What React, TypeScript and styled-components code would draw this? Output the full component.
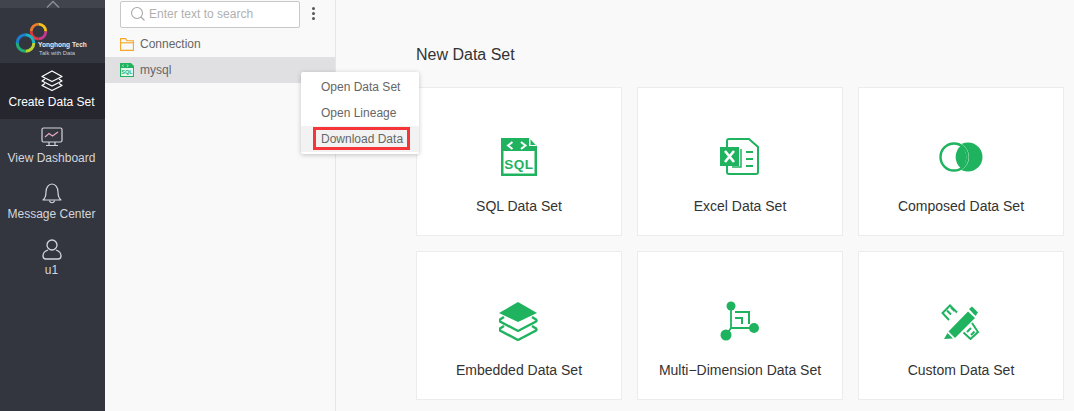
import React from "react";
import styled, { createGlobalStyle } from "styled-components";

const GREEN = "#1fb35f";

const GlobalStyle = createGlobalStyle`
  html, body {
    margin: 0;
    padding: 0;
    background: #f9f9f9;
    overflow: hidden;
  }
  * {
    box-sizing: border-box;
  }
`;

const SqlIcon = () => (
  <svg width="36" height="38" viewBox="0 0 36 38">
    <path d="M0 0H28L36 8V38H0Z" fill={GREEN} />
    <path d="M28 0V8H36" fill="#fff" />
    <path d="M29.500 1.500L34.500 7H29.500Z" fill={GREEN} />
    <rect x="2.500" y="13" width="31" height="22.500" fill="#fff" />
    <path d="M11.500 4L7 7.500L11.500 11M20 4L24.500 7.500L20 11" fill="none" stroke="#fff" strokeWidth="2" />
    <text x="18" y="31" textAnchor="middle" fontFamily="Liberation Sans, sans-serif" fontWeight="700" fontSize="13.500" letterSpacing="0.5" fill={GREEN}>SQL</text>
  </svg>
);

const ExcelIcon = () => (
  <svg width="40" height="38" viewBox="0 0 40 38">
    <path d="M7 9V3C7 2 8 1 9 1H29L38 9V34C38 35 37 36 36 36H9C8 36 7 35 7 34V27" fill="none" stroke={GREEN} strokeWidth="2" />
    <path d="M21 11V29H12" fill="none" stroke={GREEN} strokeWidth="1.500" />
    <path d="M26 14H33M26 21H33M26 28H33" stroke={GREEN} strokeWidth="2" />
    <rect x="0" y="9" width="19" height="19" fill={GREEN} />
    <path d="M5 13L14 24M14 13L5 24" stroke="#fff" strokeWidth="2.600" />
  </svg>
);

const ComposedIcon = () => (
  <svg width="44" height="30" viewBox="0 0 44 30">
    <path d="M29 .5a14.500 14.500 0 1 1 0 29a14.500 14.500 0 0 1 0-29Z" fill={GREEN} />
    <circle cx="15" cy="15" r="15" fill="#fff" />
    <circle cx="15" cy="15" r="13.500" fill="none" stroke={GREEN} strokeWidth="2.400" />
    <path d="M22 3.500a15 15 0 0 1 0 23a15 15 0 0 1 0-23Z" fill={GREEN} />
  </svg>
);

const EmbeddedIcon = () => (
  <svg width="40" height="40" viewBox="0 0 40 40">
    <path d="M19 1L38 12L19 21L0 12Z" fill={GREEN} />
    <path d="M5 16L1 18.500C.5 19 .5 20 1 20.500L19 30L37 20.500C37.500 20 37.500 19 37 18.500L33 16" fill="none" stroke={GREEN} strokeWidth="2.400" />
    <path d="M5 25L1 27.500C.5 28 .5 29 1 29.500L19 39L37 29.500C37.500 29 37.500 28 37 27.500L33 25" fill="none" stroke={GREEN} strokeWidth="2.400" />
  </svg>
);

const MultiDimIcon = () => (
  <svg width="40" height="40" viewBox="0 0 40 40">
    <circle cx="11" cy="5" r="4.500" fill={GREEN} />
    <circle cx="6" cy="34" r="5.500" fill={GREEN} />
    <circle cx="34" cy="27" r="5" fill={GREEN} />
    <path d="M11 5V27H34M11 27L6 34" fill="none" stroke={GREEN} strokeWidth="1.800" />
    <path d="M15 10H30V23H28V12H15Z" fill={GREEN} />
    <path d="M15 16H23V23H21V18H15Z" fill={GREEN} />
  </svg>
);

const CustomIcon = () => (
  <svg width="40" height="38" viewBox="0 0 40 38">
    <path d="M8 18L1.500 11L9 3.500L16 10.500M6 8.500L10 12.500M10 5.500L13.500 9" fill="none" stroke={GREEN} strokeWidth="2" />
    <path d="M31 21L37 30L29.500 37L22.500 30.500M30 26L26 30M33.500 29.500L30 33" fill="none" stroke={GREEN} strokeWidth="2" />
    <path d="M27 9.500L34 16L14 36L7.500 29.500Z" fill={GREEN} />
    <path d="M28 7L31 4.500L37 10.500L34.500 14Z" fill={GREEN} />
    <path d="M6.500 31L12 36.500L3 37Z" fill={GREEN} />
  </svg>
);

const LayersNav = () => (
  <svg width="22" height="22" viewBox="0 0 22 22" fill="none" stroke="#fff" strokeWidth="1.300" strokeLinejoin="round">
    <path d="M11 1L21 6.500L11 11.500L1 6.500Z" />
    <path d="M4 9L1 11L11 16L21 11L18 9" />
    <path d="M4 13.500L1 15.500L11 20.500L21 15.500L18 13.500" />
  </svg>
);

const MonitorNav = () => (
  <svg width="22" height="20" viewBox="0 0 22 20" fill="none" stroke="#d5d5dc" strokeWidth="1.200">
    <rect x="1" y="1" width="20" height="14" rx="1.500" />
    <path d="M4 10L8 6.500L11.500 9L17 5" stroke="#e7a9c4" />
    <path d="M8 15V18.500M14 15V18.500M5 18.500H17" />
  </svg>
);

const BellNav = () => (
  <svg width="20" height="21" viewBox="0 0 20 21" fill="none" stroke="#d5d5dc" strokeWidth="1.200" strokeLinejoin="round">
    <path d="M1 17C3.500 15 4 12.500 4 9C4 4.500 6.500 1 10 1C13.500 1 16 4.500 16 9C16 12.500 16.500 15 19 17Z" />
    <path d="M7.500 17.500C8 20.500 12 20.500 12.500 17.500" />
  </svg>
);

const UserNav = () => (
  <svg width="20" height="21" viewBox="0 0 20 21" fill="none" stroke="#d5d5dc" strokeWidth="1.300">
    <circle cx="10" cy="6" r="5" />
    <path d="M6 11C3 12 1 14.500 1 17C1 19 2 20 4 20H16C18 20 19 19 19 17C19 14.500 17 12 14 11" />
  </svg>
);

const LogoMark = () => (
  <svg width="34" height="32" viewBox="0 0 34 32" fill="none">
    <g strokeWidth="2.800">
      <path d="M16.200 9.500A7.300 7.300 0 0 1 23.500 2.200" stroke="#ee7a2b" />
      <path d="M23.500 2.200A7.300 7.300 0 0 1 30.800 9.500" stroke="#f6c21c" />
      <path d="M30.800 9.500A7.300 7.300 0 0 1 23.500 16.800" stroke="#c43a8e" />
      <path d="M23.500 16.800A7.300 7.300 0 0 1 16.200 9.500" stroke="#e2353a" />
    </g>
    <g strokeWidth="3">
      <path d="M2.200 21A8.300 8.300 0 0 1 10.500 12.700" stroke="#1c7fd0" />
      <path d="M10.500 12.700A8.300 8.300 0 0 1 18.800 21" stroke="#19b5c4" />
      <path d="M18.800 21A8.300 8.300 0 0 1 10.500 29.300" stroke="#b9d532" />
      <path d="M10.500 29.300A8.300 8.300 0 0 1 2.200 21" stroke="#1fae7a" />
    </g>
  </svg>
);

const SearchGlyph = () => (
  <svg width="16" height="16" viewBox="0 0 16 16" fill="none" stroke="#a8a8a8" strokeWidth="1.100">
    <circle cx="7" cy="7" r="5.500" />
    <path d="M11 11L14.500 14.500" />
  </svg>
);

const FolderGlyph = () => (
  <svg width="14" height="13" viewBox="0 0 14 13" fill="none" stroke="#f5a623" strokeWidth="1.100">
    <path d="M.6 12.400V.6H5.500L7 2.800H13.400V12.400Z" />
    <path d="M.6 4.800H13.400" />
  </svg>
);

const SqlGlyph = () => (
  <svg width="14" height="14" viewBox="0 0 14 14">
    <path d="M0 0H11L14 3V14H0Z" fill={GREEN} />
    <rect x="1" y="5" width="12" height="8" fill="#e6f6ec" />
    <path d="M3.500 1.500L2.500 2.700L3.500 3.800M7 1.500L8 2.700L7 3.800" fill="none" stroke="#fff" strokeWidth=".7" />
    <text x="7" y="11.300" textAnchor="middle" fontFamily="Liberation Sans, sans-serif" fontWeight="700" fontSize="5.500" fill={GREEN}>SQL</text>
  </svg>
);

const navItems = [
  { label: "Create Data Set", icon: <LayersNav />, active: true },
  { label: "View Dashboard", icon: <MonitorNav />, active: false },
  { label: "Message Center", icon: <BellNav />, active: false },
  { label: "u1", icon: <UserNav />, active: false },
];

const cards = [
  { label: "SQL Data Set", icon: <SqlIcon /> },
  { label: "Excel Data Set", icon: <ExcelIcon /> },
  { label: "Composed Data Set", icon: <ComposedIcon /> },
  { label: "Embedded Data Set", icon: <EmbeddedIcon /> },
  { label: "Multi−Dimension Data Set", icon: <MultiDimIcon /> },
  { label: "Custom Data Set", icon: <CustomIcon /> },
];

const App = () => {
  return (
    <Page>
      <GlobalStyle />
      <Sidebar>
        <CollapseStrip>
          <svg width="16" height="8" viewBox="0 0 16 8" fill="none" stroke="#8a8c94" strokeWidth="1.500">
            <path d="M2 7.500L8 1.500L14 7.500" />
          </svg>
        </CollapseStrip>
        <LogoBlock>
          <LogoMark />
          <LogoName>Yonghong Tech</LogoName>
          <LogoTag>Talk with Data</LogoTag>
        </LogoBlock>
        {navItems.map((item) => (
          <NavItem key={item.label} $active={item.active}>
            <NavIcon>{item.icon}</NavIcon>
            {item.label}
          </NavItem>
        ))}
      </Sidebar>

      <TreePanel>
        <SearchRow>
          <SearchBox>
            <SearchGlyph />
            <span>Enter text to search</span>
          </SearchBox>
          <MoreDots>
            <i />
            <i />
            <i />
          </MoreDots>
        </SearchRow>
        <TreeRow>
          <FolderGlyph />
          Connection
        </TreeRow>
        <TreeRow $selected>
          <SqlGlyph />
          mysql
        </TreeRow>
        <ContextMenu>
          <MenuItem>Open Data Set</MenuItem>
          <MenuItem>Open Lineage</MenuItem>
          <MenuItem $hover>
            Download Data
            <RedMark />
          </MenuItem>
        </ContextMenu>
      </TreePanel>

      <Main>
        <Title>New Data Set</Title>
        <CardGrid>
          {cards.map((card) => (
            <Card key={card.label}>
              <CardIcon>{card.icon}</CardIcon>
              <CardLabel>{card.label}</CardLabel>
            </Card>
          ))}
        </CardGrid>
      </Main>
    </Page>
  );
};

const Page = styled.div`
  display: flex;
  width: 1074px;
  height: 411px;
  overflow: hidden;
  font-family: "Liberation Sans", Arial, sans-serif;
`;

const Sidebar = styled.div`
  width: 105px;
  flex-shrink: 0;
  background: #33363f;
`;

const CollapseStrip = styled.div`
  height: 8px;
  background: #42444d;
  display: flex;
  justify-content: center;
  align-items: flex-end;
  overflow: hidden;
`;

const LogoBlock = styled.div`
  position: relative;
  height: 55px;
  padding: 14px 0 0 15px;
`;

const LogoName = styled.div`
  position: absolute;
  left: 38px;
  top: 32px;
  font-size: 6.600px;
  line-height: 10px;
  font-weight: 700;
  color: #e8e8ea;
  white-space: nowrap;
`;

const LogoTag = styled.div`
  position: absolute;
  left: 39px;
  top: 41px;
  font-size: 5.800px;
  line-height: 8px;
  color: #c8c8cc;
  white-space: nowrap;
`;

const NavItem = styled.div<{ $active?: boolean }>`
  height: 56px;
  padding: 7px 2px 0 0;
  display: flex;
  flex-direction: column;
  align-items: center;
  font-size: 12px;
  line-height: 16px;
  white-space: nowrap;
  color: ${(p) => (p.$active ? "#ffffff" : "#d5d5dc")};
  background: ${(p) => (p.$active ? "#25262e" : "transparent")};
`;

const NavIcon = styled.div`
  height: 22px;
  margin-bottom: 2px;
  display: flex;
  align-items: center;
  justify-content: center;
`;

const TreePanel = styled.div`
  position: relative;
  width: 231px;
  flex-shrink: 0;
  border-right: 1px solid #e6e6e6;
`;

const SearchRow = styled.div`
  display: flex;
  align-items: center;
  height: 30px;
  padding: 0 0 3px 15px;
`;

const SearchBox = styled.div`
  width: 180px;
  height: 27px;
  margin-top: 1px;
  display: flex;
  align-items: center;
  gap: 3px;
  padding-left: 9px;
  background: #fff;
  border: 1px solid #c8c8c8;
  border-radius: 2px;
  font-size: 12px;
  color: #b0b0b0;
`;

const MoreDots = styled.div`
  margin-left: 12px;
  display: flex;
  flex-direction: column;
  gap: 2px;

  i {
    display: block;
    width: 3px;
    height: 3px;
    border-radius: 50%;
    background: #555;
  }
`;

const TreeRow = styled.div<{ $selected?: boolean }>`
  height: 26px;
  margin-top: ${(p) => (p.$selected ? "0" : "1px")};
  display: flex;
  align-items: center;
  gap: 6px;
  padding-left: 15px;
  font-size: 12px;
  color: #666;
  background: ${(p) => (p.$selected ? "#e0e0e2" : "transparent")};
`;

const ContextMenu = styled.div`
  position: absolute;
  left: 196px;
  top: 72px;
  width: 118px;
  height: 82px;
  padding: 2px 0;
  background: #fff;
  border-radius: 2px;
  box-shadow: 0 1px 5px rgba(0, 0, 0, 0.22);
`;

const MenuItem = styled.div<{ $hover?: boolean }>`
  position: relative;
  height: 26px;
  padding-left: 20px;
  display: flex;
  align-items: center;
  font-size: 12px;
  color: #666;
  background: ${(p) => (p.$hover ? "#f2f2f2" : "transparent")};
`;

const RedMark = styled.div`
  position: absolute;
  left: 12px;
  top: 1px;
  width: 97px;
  height: 23px;
  border: 3px solid #f5353a;
`;

const Main = styled.div`
  flex: 1;
  padding: 46px 0 0 80px;
`;

const Title = styled.div`
  font-size: 16px;
  line-height: 18px;
  color: #333;
`;

const CardGrid = styled.div`
  display: grid;
  grid-template-columns: repeat(3, 206px);
  grid-auto-rows: 149px;
  gap: 15px;
  margin-top: 23px;
`;

const Card = styled.div`
  display: flex;
  flex-direction: column;
  align-items: center;
  background: #fff;
  border: 1px solid #ececec;
`;

const CardIcon = styled.div`
  height: 38px;
  margin-top: 50px;
  display: flex;
  align-items: center;
  justify-content: center;
`;

const CardLabel = styled.div`
  margin-top: 21px;
  font-size: 14px;
  line-height: 18px;
  color: #333;
  white-space: nowrap;
`;

export default App;
